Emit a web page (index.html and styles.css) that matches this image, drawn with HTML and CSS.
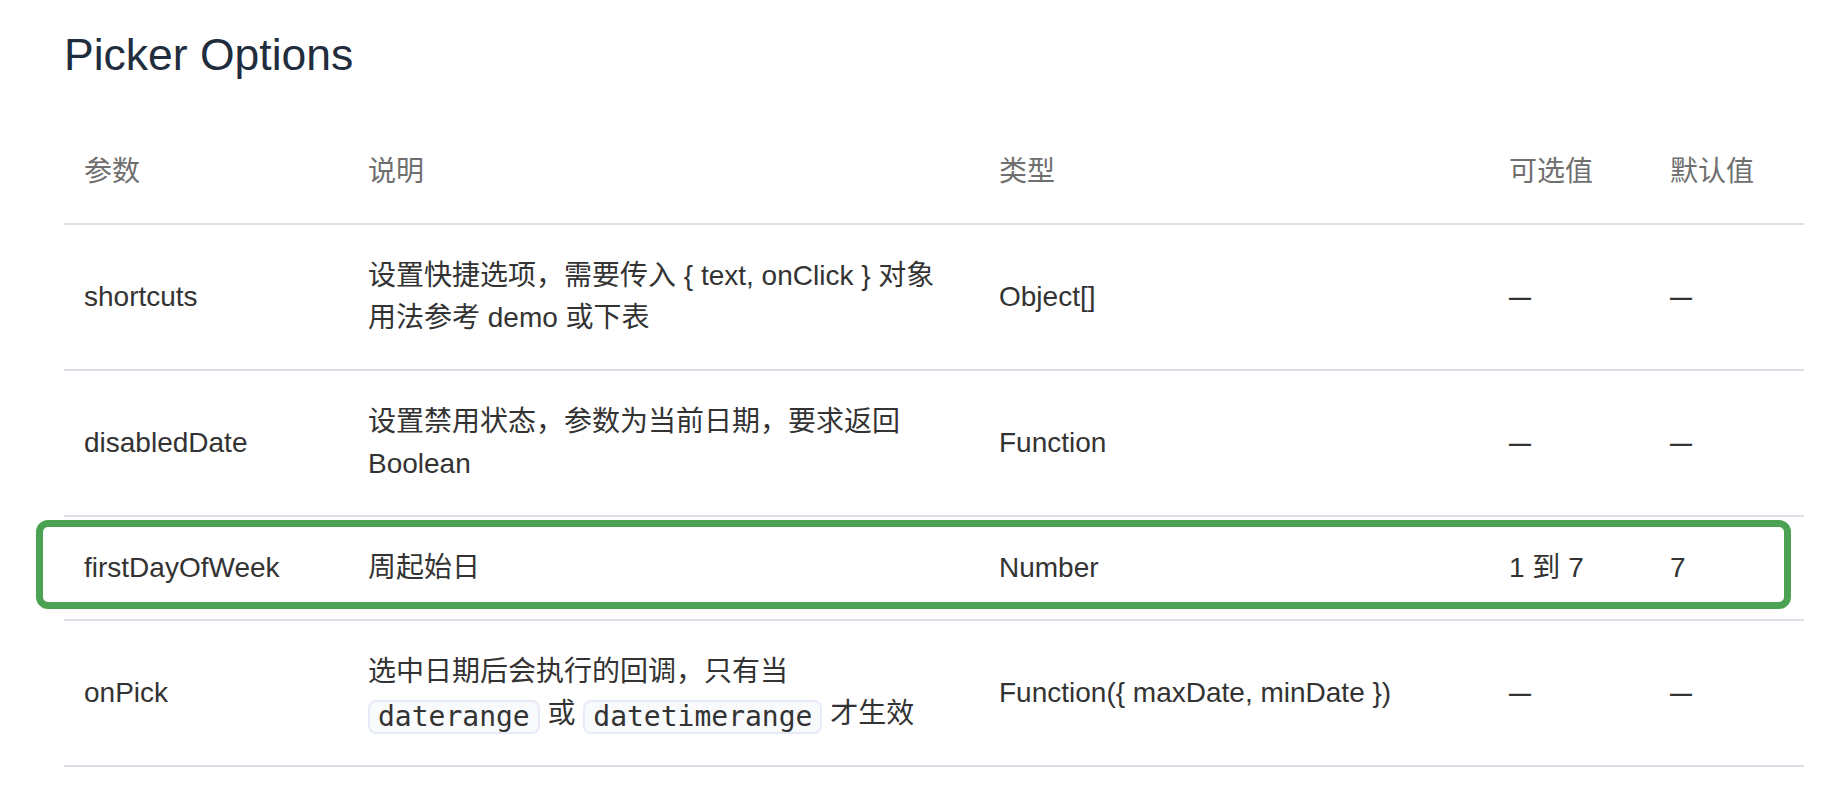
FILE: index.html
```html
<!DOCTYPE html>
<html lang="zh-CN">
<head>
<meta charset="utf-8">
<title>Picker Options</title>
<link rel="stylesheet" href="styles.css">
</head>
<body>
<div class="page">
  <h3 class="title">Picker Options</h3>
  <div class="table-wrap">
    <table class="options">
      <colgroup>
        <col class="c-param">
        <col class="c-desc">
        <col class="c-type">
        <col class="c-values">
        <col class="c-default">
      </colgroup>
      <thead>
        <tr>
          <th>参数</th>
          <th>说明</th>
          <th>类型</th>
          <th>可选值</th>
          <th>默认值</th>
        </tr>
      </thead>
      <tbody>
        <tr>
          <td>shortcuts</td>
          <td>设置快捷选项，需要传入 { text, onClick } 对象<br>用法参考 demo 或下表</td>
          <td>Object[]</td>
          <td><span class="dash">—</span></td>
          <td><span class="dash">—</span></td>
        </tr>
        <tr>
          <td>disabledDate</td>
          <td>设置禁用状态，参数为当前日期，要求返回<br>Boolean</td>
          <td>Function</td>
          <td><span class="dash">—</span></td>
          <td><span class="dash">—</span></td>
        </tr>
        <tr>
          <td>firstDayOfWeek</td>
          <td>周起始日</td>
          <td>Number</td>
          <td>1 到 7</td>
          <td>7</td>
        </tr>
        <tr>
          <td>onPick</td>
          <td>选中日期后会执行的回调，只有当<br><code>daterange</code> 或 <code>datetimerange</code> 才生效</td>
          <td>Function({ maxDate, minDate })</td>
          <td><span class="dash">—</span></td>
          <td><span class="dash">—</span></td>
        </tr>
      </tbody>
    </table>
    <div class="highlight"></div>
  </div>
</div>
</body>
</html>
```

FILE: styles.css
```css
html, body {
  margin: 0;
  padding: 0;
  background: #ffffff;
}

body {
  font-family: "Liberation Sans", "Noto Sans CJK SC", sans-serif;
}

.page {
  padding-left: 64px;
}

.title {
  margin: 0;
  padding-top: 22px;
  font-size: 44.5px;
  line-height: 66px;
  font-weight: 400;
  color: #1f2d3d;
}

.table-wrap {
  position: relative;
  width: 1740px;
  margin-top: 33px;
}

.options {
  width: 1740px;
  table-layout: fixed;
  border-collapse: collapse;
  border-spacing: 0;
  font-size: 28px;
  line-height: 42px;
}

.c-param { width: 284px; }
.c-desc { width: 631px; }
.c-type { width: 510px; }
.c-values { width: 161px; }
.c-default { width: 154px; }

.options th,
.options td {
  text-align: left;
  vertical-align: middle;
  padding: 30px 20px;
  border-bottom: 2px solid #dcdfe6;
  white-space: nowrap;
}

.options th {
  font-weight: 400;
  color: #6f6f6f;
}

.options td {
  color: #333333;
}

.dash {
  font-size: 22px;
  font-weight: 700;
  color: #333333;
}

.options code {
  display: inline-block;
  font-family: "DejaVu Sans Mono", "Liberation Mono", monospace;
  font-size: 28px;
  line-height: 30px;
  padding: 0 8px;
  border: 2px solid #e7eaf8;
  border-radius: 8px;
  background: #f9fafc;
  color: #333333;
  vertical-align: -3px;
}

.highlight {
  position: absolute;
  left: -28px;
  top: 399px;
  width: 1755px;
  height: 89px;
  box-sizing: border-box;
  border: 7px solid #4ba252;
  border-radius: 12px;
  pointer-events: none;
}
```
